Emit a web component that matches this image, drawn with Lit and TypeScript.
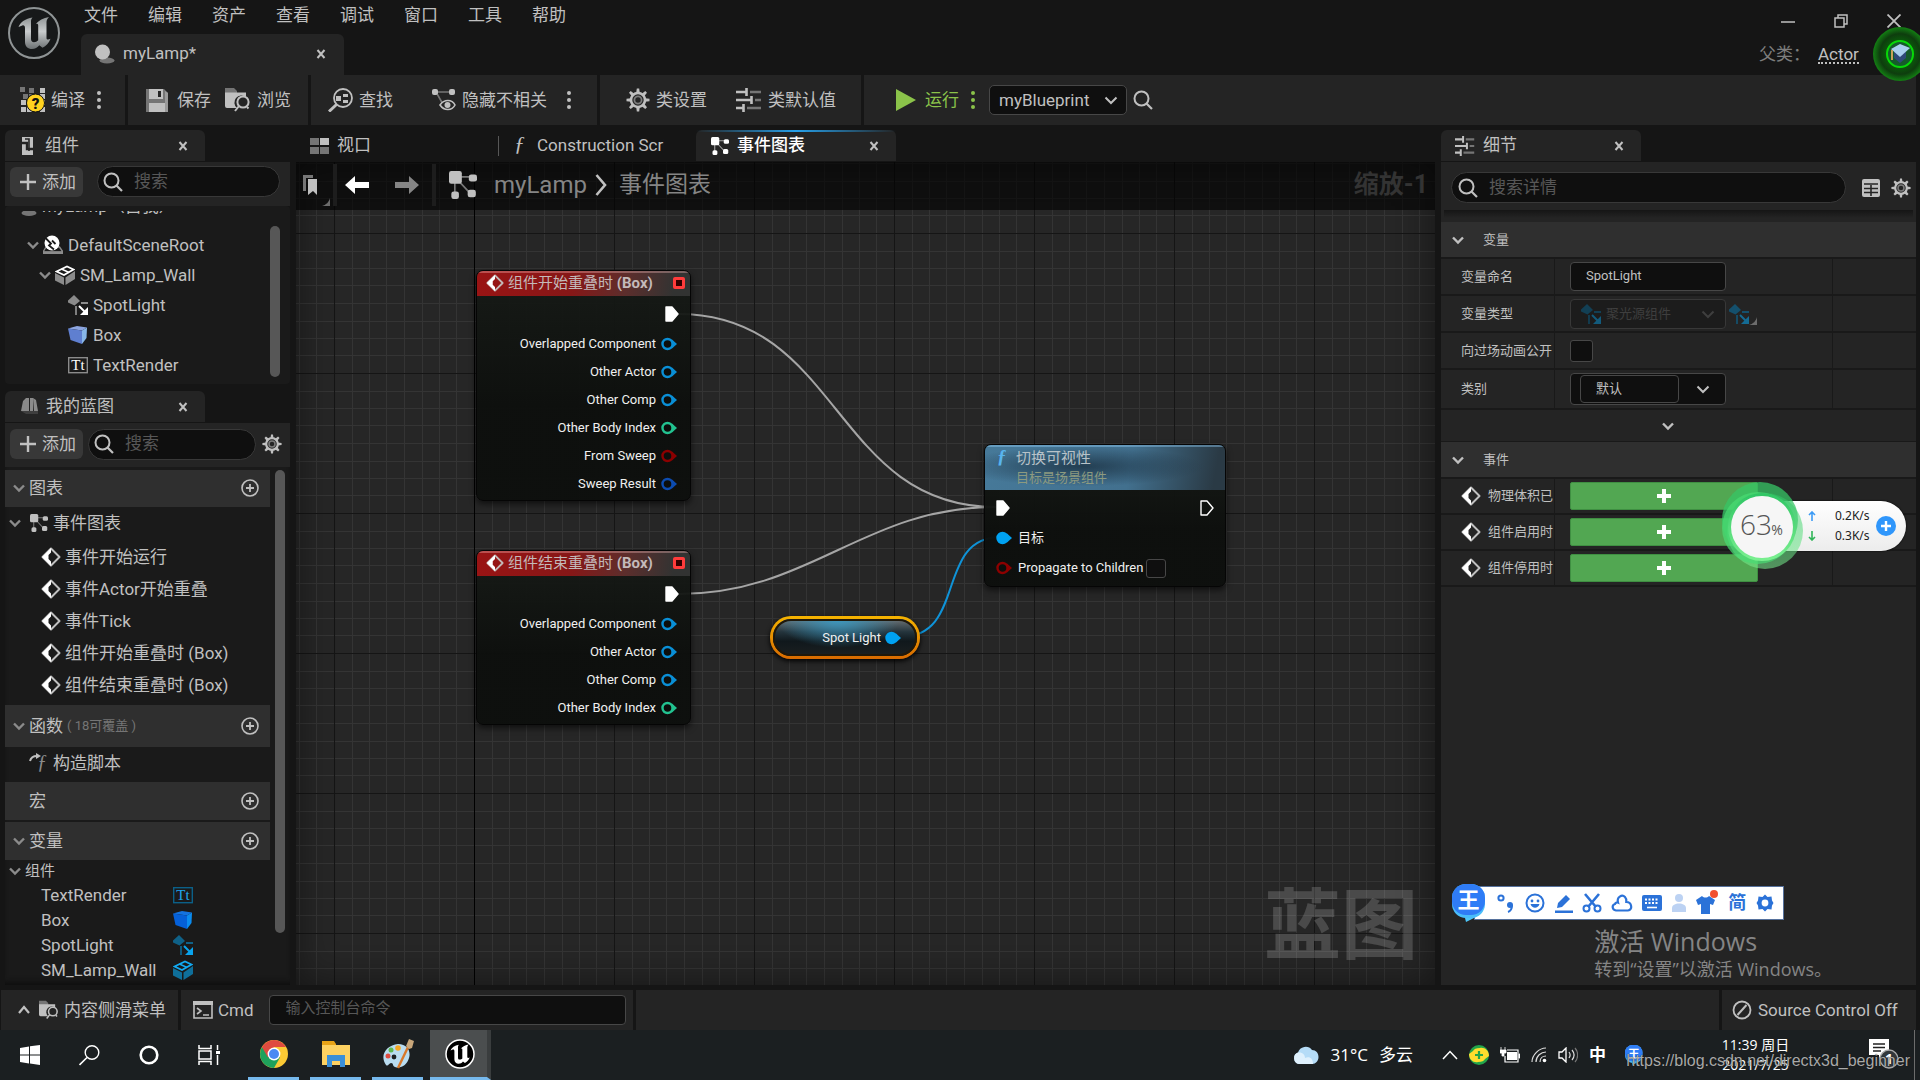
import { LitElement, html, svg, css, nothing } from "lit";
import { customElement } from "lit/decorators.js";

type Frag = unknown;

const ico = (w: number, h: number, body: Frag, cls = "") =>
  html`<svg class="ico ${cls}" width=${w} height=${h} viewBox="0 0 ${w} ${h}" aria-hidden="true">${body}</svg>`;

const chevron = (cls = "") =>
  ico(12, 12, svg`<path d="M1 3.500 6 8.500l5-5" fill="none" stroke="currentColor" stroke-width="2.400"/>`, cls);
const bigChevron = () =>
  ico(14, 12, svg`<path d="M1.500 3.500 7 9l5.500-5.500" fill="none" stroke="currentColor" stroke-width="2"/>`);
const cross = () =>
  ico(10, 10, svg`<path d="M1.500 1 8.500 9M8.500 1 1.500 9" stroke="currentColor" stroke-width="2" fill="none"/>`);
const magnifier = () =>
  ico(20, 20, svg`<circle cx="8.500" cy="8.500" r="7" fill="none" stroke="currentColor" stroke-width="2"/><path d="m13.500 13.500 5.500 5.500" stroke="currentColor" stroke-width="2.200"/>`);
const plusBig = () =>
  ico(18, 18, svg`<path d="M9 1v16M1 9h16" stroke="currentColor" stroke-width="2.400"/>`);
const plusCircle = () =>
  ico(18, 18, svg`<circle cx="9" cy="9" r="8" fill="none" stroke="currentColor" stroke-width="1.600"/><path d="M9 5v8M5 9h8" stroke="currentColor" stroke-width="1.800"/>`);
const dots = () =>
  ico(4, 20, svg`<circle cx="2" cy="3" r="2" fill="currentColor"/><circle cx="2" cy="10" r="2" fill="currentColor"/><circle cx="2" cy="17" r="2" fill="currentColor"/>`);

const gear = (s: number) => html`<svg class="ico" width=${s} height=${s} viewBox="0 0 24 24" aria-hidden="true">
  ${[0, 45, 90, 135, 180, 225, 270, 315].map(
    (a) => svg`<path d="M10.200 5 10.800.5h2.400L13.800 5z" fill="currentColor" transform="rotate(${a} 12 12)"/>`
  )}
  <circle cx="12" cy="12" r="7" fill="none" stroke="currentColor" stroke-width="2.600"/>
  <circle cx="12" cy="12" r="3.600" fill="none" stroke="#7c7c7c" stroke-width="1.800"/>
</svg>`;

const sliders = (w: number, h: number) =>
  html`<svg class="ico" width=${w} height=${h} viewBox="0 0 26 24" preserveAspectRatio="none" aria-hidden="true">
    <path d="M0 4h10M0 12h15M0 20h7" stroke="currentColor" stroke-width="2.600"/>
    <path d="M14 4h11M19 12h6M11 20h14" stroke="#757575" stroke-width="2.600"/>
    <path d="M10.500 0v8M15.500 8v8M7.500 16v8" stroke="currentColor" stroke-width="2.600"/>
  </svg>`;

const graphIcon = (s: number) => html`<svg class="ico" width=${s} height=${s} viewBox="0 0 24 24" aria-hidden="true">
  <path d="M5 5h16M5 5v16M5 5l14 15" stroke="currentColor" opacity=".6" stroke-width="1.400" fill="none"/>
  <rect x="0" y="0" width="11" height="11" rx="2" fill="currentColor"/>
  <rect x="17" y="3" width="7" height="6" rx="2" fill="currentColor"/>
  <rect x="2" y="17.500" width="6.500" height="6.500" rx="2" fill="currentColor"/>
  <rect x="16" y="16" width="7" height="6.500" rx="2" fill="currentColor"/>
</svg>`;

const eventIcon = (s = 20) => html`<svg class="ico" width=${s} height=${s} viewBox="0 0 20 20" aria-hidden="true">
  <path d="M10 1.500 18.500 10 10 18.500 1.500 10z" fill="none" stroke="currentColor" stroke-width="2" stroke-linejoin="round"/>
  <path d="M10 1 1 10l9 9v-4.500L7.500 12V8L10 5.500z" fill="#fff"/>
</svg>`;

const folderSearch = (s: number) => html`<svg class="ico" width=${s} height=${s} viewBox="0 0 26 26" aria-hidden="true">
  <path d="M0 1h9l3 3v3H0z" fill="#757575"/>
  <path d="M0 5.500h21V10a7 7 0 0 0-9 11H2a2 2 0 0 1-2-2z" fill="currentColor"/>
  <circle cx="18" cy="15" r="5.600" fill="#242424" stroke="currentColor" stroke-width="2"/>
  <path d="m14 19-4 5M22 20l1.500 1.500" stroke="currentColor" stroke-width="2"/>
</svg>`;

const spotIcon = (dim: string, lit: string) =>
  ico(20, 20, svg`
    <path d="M6 0 12 6 6.500 10.500 0 7.500V5.500z" fill=${dim}/>
    <path d="M13 8h7M8 11v9" stroke=${dim} stroke-width="1.800"/>
    <path d="m11 11 7 7" stroke=${lit} stroke-width="2"/>
    <path d="M20 12v8h-8z" fill=${lit}/>`);
const meshIcon = (dim: string, lit: string) =>
  ico(20, 20, svg`
    <path d="M0 8 9 12.500V20l-9-4.500zM20 6v8L10.500 20v-7.500z" fill=${dim}/>
    <path d="M1.500 6.500 12 1.500 18.500 4.500 9 10z" fill="none" stroke=${lit} stroke-width="1.800"/>
    <path d="M6.500 4 14 7.500" stroke=${lit} stroke-width="1.400"/>`);
const textIcon = (frame: string, lit: string) =>
  ico(20, 20, svg`
    <rect x=".7" y="2.700" width="18.600" height="15" fill="none" stroke=${frame} stroke-width="1.400"/>
    <text x="10" y="15" text-anchor="middle" font-family="Liberation Serif, serif" font-size="15" fill=${lit}>Tt</text>`);
const boxIcon = (a: string, b: string, c: string) =>
  ico(20, 20, svg`
    <path d="M0 3.500 9 1l10 1.500-5 3z" fill=${c}/>
    <path d="M0 3.500 14 5.500V19L2.500 15z" fill=${a}/>
    <path d="M14 5.500 19 2.500 18.500 13 14 19z" fill=${b}/>`);
const sceneIcon = () =>
  ico(20, 20, svg`
    <path d="M3 12 0 17h20l-3.500-5z" fill="none" stroke="#8b8b8b" stroke-width="1.400"/>
    <path d="M0 16.500h20V19H0z" fill="#8b8b8b"/>
    <circle cx="9" cy="8" r="7.500" fill="#fff"/>
    <path d="M2.500 3 8 8.500 6 10.500l5 4" fill="none" stroke="#1a1a1a" stroke-width="1.800"/>
    <path d="M9 5.500 12.500 9" stroke="#1a1a1a" stroke-width="1.800"/>`);
const selfIcon = () =>
  ico(18, 20, svg`<circle cx="7" cy="9" r="6.500" fill="currentColor"/><ellipse cx="10" cy="17" rx="7.500" ry="3" fill="#757575"/>`);
const sphereIcon = () =>
  ico(20, 20, svg`<ellipse cx="12" cy="16.500" rx="7.500" ry="3" fill="#757575"/><circle cx="7.500" cy="8" r="7.500" fill="currentColor"/>`);

const unrealMark = svg`
  <path d="M0 10C2 5 7 1.500 14 .5c-1.500 1.500-1.500 3-1.500 5V22c0 2 1 3.200 3 3.200 1.700 0 3-.8 4.200-2V8.500c0-1.700-1-2-2.700-1.300C20 3.500 25 1 30.500 0 28.500 2 28 3.500 28 5.500V21c0 1.800 1.800 2 4 .8-1.500 4.200-4.500 7.500-8 9l-3.200-2.600C19 30.500 16.500 32 13.500 32 9.500 32 6.500 29.500 6.500 25V11c0-2-1-3-2.700-2.500C2.500 8.800 1.300 9.500 0 10z"/>`;

const unrealLogo = () => html`<svg class="logo" width="52" height="64" viewBox="0 0 52 64" aria-label="Unreal">
  <defs><linearGradient id="steel" x1="0" y1="0" x2="0" y2="1"><stop offset="0" stop-color="#8f9495"/><stop offset=".45" stop-color="#c9cccd"/><stop offset="1" stop-color="#6c7173"/></linearGradient></defs>
  <circle cx="26" cy="33" r="25" fill="#17191a" stroke="#8f9495" stroke-width="2"/>
  <g transform="translate(10.500 17)" fill="url(#steel)">${unrealMark}</g>
</svg>`;

const pin = (color: string, filled = false) =>
  ico(16, 14, svg`
    <path d="M11 2.500 16 7l-5 4.500z" fill=${color}/>
    <circle cx="6.500" cy="7" r="5" fill=${filled ? color : "#0c0e0c"} stroke=${color} stroke-width="2.400"/>`);
const execPin = (filled: boolean) =>
  ico(14, 16, svg`<path d="M1 1h6l6 7-6 7H1z" fill=${filled ? "#fff" : "none"} stroke="#fff" stroke-width="1.400" stroke-linejoin="round"/>`);
const corner = () => ico(8, 8, svg`<path d="M8 0v8H0C4 7 7 4 8 0z" fill="#6c6c6c"/>`, "corner");

const BLUE = "#0a8fd6";
const CYAN = "#22c290";
const RED = "#8c0000";
const NAVY = "#0d4cb0";

interface GraphPin { label: string; color: string; }
interface TreeRow { level: number; label: string; icon: Frag; open?: boolean; }

@customElement("app-root")
export class AppRoot extends LitElement {
  static styles = css`
    :host {
      display: flex; flex-direction: column; position: relative; min-height: 100vh; overflow: hidden;
      background: #151515; color: #c0c0c0;
      font: 17px/20px Roboto, "Noto Sans CJK SC", sans-serif;
    }
    * { box-sizing: border-box; }
    button, input, select { font: inherit; color: inherit; background: none; border: 0; padding: 0; margin: 0; }
    input { min-width: 0; outline: 0; }
    input::placeholder { color: #575757; opacity: 1; }
    h2, h3, ul, p { margin: 0; padding: 0; font: inherit; list-style: none; }
    a { color: inherit; text-decoration: none; }
    .ico { flex: none; display: block; }
    button { display: flex; align-items: center; white-space: nowrap; }
    .grow { flex: 1; }

    .titlebar { display: flex; height: 75px; padding-left: 8px; }
    .logo { flex: none; }
    .titles { display: flex; flex-direction: column; justify-content: space-between; margin-left: 21px; }
    .menus { display: flex; gap: 30px; height: 30px; padding-left: 3px; }
    .tab { display: flex; align-items: center; width: 200px; height: 31px; padding: 0 17px 0 16px; border-radius: 6px 6px 0 0; background: #242424; }
    .tab .name { flex: 1; margin-left: 8px; padding-bottom: 2px; overflow: hidden; white-space: nowrap; text-align: left; }
    .file { width: 263px; height: 41px; padding: 0 18px 2px 14px; }
    .window { display: flex; flex-direction: column; margin-left: auto; padding: 14px 19px 0 0; }
    .winbtns { display: flex; gap: 39px; }
    .parent { display: flex; gap: 8px; margin: 16px 0 0 -22px; color: #7d7d7d; }
    .parent a { color: #c0c0c0; border-bottom: 2px dotted #c0c0c0; height: 20px; }

    .toolbar { display: flex; gap: 3px; height: 50px; margin-right: 4px; }
    .toolgroup { display: flex; align-items: center; background: #242424; }
    .toolgroup button { gap: 6px; }
    .g1 { width: 125px; padding-left: 20px; gap: 12px; }
    .g2 { width: 180px; padding-left: 18px; gap: 14px; }
    .g2 button { gap: 8px; }
    .g2 button + button { gap: 6px; }
    .g3 { width: 286px; padding-left: 17px; gap: 39px; }
    .g3 .pair { display: flex; gap: 20px; }
    .g4 { width: 261px; padding-left: 26px; gap: 29px; }
    .g5 { flex: 1; padding-left: 32px; }
    .run { color: #8bc34a; margin-right: 12px; }
    .g5 .run { gap: 9px; }
    .selectbox { position: relative; display: flex; align-items: center; margin: 0 6px 0 14px; color: #c0c0c0; }
    .selectbox select { appearance: none; width: 138px; height: 30px; padding-left: 9px; background: #0f0f0f; border: 1px solid #474747; border-radius: 5px; }
    .selectbox .ico { position: absolute; right: 9px; pointer-events: none; }
    .green { color: #8bc34a; }

    .main { display: flex; flex: 1; gap: 6px; padding: 5px 4px 0 5px; }
    .side { display: flex; flex-direction: column; flex: 0 0 285px; }
    .tools { display: flex; align-items: center; height: 44px; margin-top: 1px; padding: 0 8px 5px 5px; background: #242424; }
    .tools.low { padding-bottom: 2px; }
    .add { height: 30px; width: 73px; padding-left: 9px; gap: 5px; border-radius: 6px; background: #383838; }
    .search { display: flex; align-items: center; flex: 1; height: 31px; padding-left: 5px; gap: 11px; border: 1px solid #383838; border-radius: 16px; background: #0f0f0f; }
    .search input { flex: 1; padding-bottom: 2px; }
    .search-a { margin: 0 2px 0 14px; }
    .search-b { margin: 0 6px 0 5px; }
    .tree { display: flex; height: 178px; padding-top: 5px; background: #1a1a1a; border-radius: 4px; }
    .rows { flex: 1; overflow: hidden; }
    .treerow { display: flex; align-items: center; height: 30px; padding-left: 22px; }
    .treerow .ico + .ico { margin-left: 4px; }
    .treerow span { margin-left: 5px; }
    .treerow.l0 { height: 34px; margin-top: -15px; padding: 0 0 15px 14px; }
    .treerow.l2 { padding-left: 34px; }
    .treerow.l3 { padding-left: 63px; }
    .dim { color: #8b8b8b; }
    .thumb { flex: none; width: 10px; border-radius: 5px; background: #575757; }
    .tree .thumb { height: 151px; margin: 15px 10px 0 0; }
    .tab.second { margin-top: 7px; }
    .blueprint { display: flex; flex: 1; padding: 3px 5px 0 0; gap: 5px; background: #1a1a1a; box-shadow: inset 0 -6px 6px -4px #0c0c0c; }
    .sections { flex: 1; }
    .blueprint .thumb { height: 463px; }
    .section { display: flex; align-items: center; height: 38px; padding: 0 11px 0 8px; gap: 4px; background: #2f2f2f; }
    .section small { font-size: 13px; color: #757575; }
    .section.first { height: 37px; padding-bottom: 2px; }
    .section.tall { height: 42px; }
    .section.macro { margin-bottom: 2px; padding-left: 24px; }
    .leaf { display: flex; align-items: center; height: 32px; padding-left: 36px; gap: 4px; }
    .leaf.head { height: 34px; padding: 0 0 2px 4px; }
    .leaf.head .ico + .ico { margin-left: 5px; }
    .leaf.head span { margin-left: 1px; }
    .leaf.last { margin-bottom: 4px; }
    .leaf.script { height: 35px; padding: 0 0 3px 24px; }
    .leaf.group { height: 22px; padding-left: 4px; font-size: 15px; }
    .leaf.variable { height: 25px; }
    .leaf.variable span { width: 128px; }

    .center { display: flex; flex-direction: column; flex: 1; min-width: 0; }
    .tabs { display: flex; height: 31px; }
    .tabs .tab { background: none; padding-left: 14px; }
    .tabs .tab + .tab::before { content: ""; width: 1px; height: 20px; margin-right: 14px; background: #575757; }
    .tabs .tab.script { padding-left: 2px; padding-right: 32px; }
    .script .name { margin-left: 10px; }
    .tabs .tab.active { position: relative; padding-left: 15px; background: #242424; color: #fff; }
    .tabs .tab.active::before { position: absolute; left: 0; right: 0; top: 0; width: auto; height: 2px; margin: 0; background: linear-gradient(90deg, transparent, #26a0ea, transparent); }
    .active .name { font-weight: 500; }
    .active .x { color: #c0c0c0; }
    .graph { position: relative; flex: 1; margin-top: 1px; background: #262626; overflow: hidden; }
    .grid { position: absolute; inset: 0; width: 100%; height: 100%; }
    .shade { position: absolute; inset: 0; box-shadow: inset 0 0 36px rgba(0, 0, 0, 0.45); }
    .crumbs { position: relative; display: flex; align-items: center; height: 48px; padding: 0 7px 2px 7px; background: rgba(0, 0, 0, 0.6); font-size: 24px; line-height: 32px; color: #858585; }
    .crumbs .rule { width: 4px; height: 42px; background: #1d1d1d; }
    .mark { height: 42px; margin-right: 3px; gap: 3px; }
    .corner { align-self: flex-end; }
    .back { color: #fff; margin: 0 26px 0 8px; }
    .fwd { margin-right: 13px; }
    .crumbs .type { display: flex; color: #c0c0c0; margin: 0 17px 0 13px; }
    .crumbs .sep { margin: 0 12px 0 8px; color: #c0c0c0; }
    .crumbs .current { font-size: 23px; }
    .crumbs .zoom { margin-left: auto; color: #333; font-size: 25px; font-weight: 700; }
    .brand { position: absolute; right: 17px; bottom: 12px; font-size: 77px; line-height: 92px; font-weight: 700; color: rgba(255, 255, 255, 0.17); }

    .node { position: absolute; border: 1px solid #050505; border-radius: 7px; background: linear-gradient(rgba(22, 26, 22, 0.94), rgba(13, 15, 13, 0.97) 60%); box-shadow: 0 3px 6px rgba(0, 0, 0, 0.6); color: #f0f0f0; font-size: 13px; line-height: 18px; overflow: hidden; }
    .event { left: 180px; width: 215px; padding-bottom: 2px; }
    .n1 { top: 108px; }
    .n2 { top: 388px; }
    .n3 { left: 688px; top: 282px; width: 242px; padding-bottom: 3px; }
    .event h3 { display: flex; align-items: center; height: 25px; padding: 0 5px 3px 9px; gap: 4px; font-size: 15px; color: #c4b9b9; border-top: 2px solid rgba(255, 190, 190, 0.35); background: linear-gradient(100deg, #9a1414, #861717 45%, #5c2e2c 70%, #323332 92%); }
    .stop { width: 12px; height: 12px; margin-left: auto; border: 3px solid #ff3b3b; background: #300; border-radius: 2px; }
    .outexec { display: flex; justify-content: flex-end; align-items: center; height: 34px; padding: 1px 11px 0 0; }
    .pinrow { display: flex; justify-content: flex-end; align-items: center; height: 28px; gap: 5px; padding-right: 13px; }
    .fn { height: 45px; padding: 1px 0 0 31px; color: #b8c2c8; font-size: 15px; line-height: 20px; border-top: 2px solid rgba(140, 200, 240, 0.45); background: radial-gradient(ellipse at 40% 45%, rgba(24, 44, 60, 0.75), transparent 60%), linear-gradient(100deg, #467999, #42708e 60%, #2a3a45 95%); position: relative; }
    .fn p { font-size: 13px; line-height: 20px; color: #8c9a80; }
    .fn .ico { position: absolute; left: 11px; top: 2px; }
    .inrow { display: flex; align-items: center; height: 30px; padding: 0 12px 0 11px; gap: 6px; }
    .inrow.exec { justify-content: space-between; margin-top: 3px; padding-right: 11px; }
    .inrow label { display: flex; align-items: center; gap: 3px; }
    .check { appearance: none; width: 20px; height: 19px; border: 1px solid #474747; border-radius: 3px; background: #0f0f0f; }
    .getter { position: absolute; left: 474px; top: 454px; width: 150px; height: 43px; padding: 0 16px 0 0; display: flex; align-items: center; justify-content: flex-end; gap: 4px; border: 3px solid transparent; border-radius: 21px; color: #f0f0f0; font-size: 13px;
      background: radial-gradient(ellipse at 45% 0, #3b98c0, transparent 55%) padding-box, linear-gradient(#6d7376, #24343c 35%, #10181c 60%, #1b1f20) padding-box, linear-gradient(#f5b400, #d86a00) border-box; box-shadow: inset 0 0 0 2px #20180a, 0 2px 5px #000; }

    .details { display: flex; flex-direction: column; flex: 0 0 475px; font-size: 13px; line-height: 18px; }
    .details .tab { font-size: 17px; line-height: 20px; padding-left: 14px; }
    .pane { flex: 1; margin-top: 1px; background: #242424; }
    .filter { display: flex; align-items: center; padding: 10px 5px 0 10px; height: 41px; gap: 11px; font-size: 17px; }
    .filter .search { flex: 1; margin-right: 5px; padding-left: 6px; }
    .drop { height: 8px; margin: 7px 3px 4px; background: linear-gradient(#151515, transparent); }
    .cat { display: flex; align-items: center; height: 35px; padding-left: 11px; gap: 19px; background: #2f2f2f; }
    .prop { display: grid; grid-template-columns: 113px 278px 1fr; height: 37px; border-top: 2px solid #191919; }
    .prop.tall { height: 40px; }
    .prop.event-prop { height: 36px; }
    .prop > * { display: flex; align-items: center; padding-left: 15px; border-left: 1px solid #191919; overflow: hidden; white-space: nowrap; }
    .prop > :first-child { border: 0; padding-left: 20px; gap: 7px; }
    .prop input[type="text"] { width: 156px; height: 29px; padding: 0 0 3px 15px; border: 1px solid #474747; border-radius: 4px; background: #0f0f0f; }
    .prop .cb { width: 23px; height: 22px; }
    .typebtn { width: 156px; height: 30px; padding: 0 10px; gap: 5px; border: 1px solid #383838; border-radius: 4px; color: #3e3e3e; background: #1c1c1c; margin-right: 3px; }
    .typebtn .last { margin-left: auto; }
    .prop .corner { margin-bottom: 6px; }
    .combo { display: flex; align-items: center; width: 156px; height: 32px; padding-left: 9px; border: 1px solid #474747; border-radius: 4px; background: #0f0f0f; }
    .combo input[type="text"] { width: 99px; height: 28px; margin-right: 17px; }
    .more { display: flex; width: 100%; height: 34px; justify-content: center; border-top: 2px solid #191919; border-bottom: 1px solid #191919; padding-right: 21px; }
    .bind { justify-content: center; width: 188px; height: 28px; background: #52a752; border: 1px solid #3f8f42; border-radius: 2px; color: #fff; }
    .endline { height: 3px; border-top: 2px solid #191919; }

    .activate { position: absolute; right: 88px; top: 924px; color: #858585; font: 25px/34px "Open Sans", "Noto Sans CJK SC", sans-serif; }
    .activate p { font-size: 18px; line-height: 22px; }
    .ime { position: absolute; right: 136px; top: 886px; display: flex; align-items: center; justify-content: space-between; width: 310px; height: 34px; padding: 0 8px 0 21px; background: #fff; border: 1px solid #56719c; color: #2b72d8; }
    .ime .badge { position: absolute; left: -23px; top: -3px; }
    .ime b { font-size: 18px; line-height: 20px; }
    .meter { position: absolute; right: 14px; top: 480px; display: flex; align-items: center; height: 92px; color: #222; }
    .pill { display: flex; align-items: center; width: 166px; height: 50px; margin-left: -64px; padding: 0 10px 0 68px; border-radius: 0 25px 25px 0; background: linear-gradient(#fff, #ececec); font: 12px/20px "Noto Sans", sans-serif; box-shadow: 0 0 2px #000; }
    .pill .arrows { margin-right: 19px; }
    .pill .plus { margin-left: auto; }
    .orb { position: relative; z-index: 1; }
    .cap { position: absolute; right: -7px; top: 27px; }

    .status { display: flex; gap: 3px; height: 45px; padding: 5px 4px 0 1px; }
    .status > * { display: flex; align-items: center; height: 40px; background: #242424; }
    .drawer { width: 177px; padding-left: 17px; }
    .drawer .ico + .ico { margin: 0 5px 0 9px; }
    .cmd { width: 452px; padding: 0 7px 0 12px; gap: 5px; }
    .cmd input { flex: 1; height: 30px; margin-left: 10px; padding: 0 0 4px 16px; font-size: 15px; border: 1px solid #474747; border-radius: 4px; background: #0f0f0f; }
    .cmd label { display: flex; align-items: center; gap: 5px; }
    .source { width: 194px; padding-left: 10px; gap: 6px; }

    .taskbar { position: relative; display: flex; align-items: center; height: 50px; padding: 0 5px 0 20px; background: #1b1f21; color: #fff; }
    .sys { display: flex; align-items: center; gap: 39px; margin-right: 28px; }
    .app { display: flex; justify-content: center; width: 51px; height: 50px; margin-right: 11px; border-bottom: 3px solid #76b9ed; }
    .app.now { width: 61px; margin: 0 0 0 -4px; padding-left: 2px; background: #4b4e4f; border-right: 4px solid #3a3d3e; }
    .tray { display: flex; align-items: center; height: 50px; margin-left: auto; border-right: 1px solid #6c6c6c; font: 17px/20px "Open Sans", "Noto Sans CJK SC", sans-serif; }
    .weather { display: flex; align-items: center; gap: 12px; margin-right: 29px; }
    .weather .words { display: flex; gap: 11px; }
    .icons { display: flex; align-items: center; gap: 11px; margin-right: 76px; }
    .icons b { margin-right: 8px; }
    .clock { font-size: 14px; text-align: center; width: 73px; margin-right: 77px; white-space: nowrap; }
    .note { margin-right: 14px; }
    .credit { position: absolute; right: 10px; top: 21px; font: 16px/20px "Liberation Sans", sans-serif; color: rgba(225, 225, 225, 0.75); text-shadow: 0 0 1px #000; }
  `;

  private menus = ["文件", "编辑", "资产", "查看", "调试", "窗口", "工具", "帮助"];

  private tree: TreeRow[] = [
    { level: 1, label: "DefaultSceneRoot", icon: sceneIcon(), open: true },
    { level: 2, label: "SM_Lamp_Wall", icon: meshIcon("#8b8b8b", "#fff"), open: true },
    { level: 3, label: "SpotLight", icon: spotIcon("#8b8b8b", "#fff") },
    { level: 3, label: "Box", icon: boxIcon("#5f7fd0", "#88b7e8", "#8da5e0") },
    { level: 3, label: "TextRender", icon: textIcon("#8b8b8b", "#fff") },
  ];

  private events = ["事件开始运行", "事件Actor开始重叠", "事件Tick", "组件开始重叠时 (Box)", "组件结束重叠时 (Box)"];

  private variables: [string, Frag][] = [
    ["TextRender", textIcon("#0b6088", "#1fa5ef")],
    ["Box", boxIcon("#0560d8", "#0a8cf0", "#1473e0")],
    ["SpotLight", spotIcon("#0f6187", "#09a4ee")],
    ["SM_Lamp_Wall", meshIcon("#0f6f9a", "#12aaf2")],
  ];

  private basePins: GraphPin[] = [
    { label: "Overlapped Component", color: BLUE },
    { label: "Other Actor", color: BLUE },
    { label: "Other Comp", color: BLUE },
    { label: "Other Body Index", color: CYAN },
  ];

  private tabHead(icon: Frag, name: string, cls = "") {
    return html`<div class="tab ${cls}">${icon}<span class="name">${name}</span><button class="x" aria-label="关闭">${cross()}</button></div>`;
  }

  private search(id: string, hint: string, cls = "") {
    return html`<label class="search ${cls}" for=${id}>${magnifier()}<input id=${id} type="text" placeholder=${hint} size="4" /></label>`;
  }

  private section(name: string, cls: string, open: boolean, extra: Frag = nothing) {
    return html`<h3 class="section ${cls}">${open ? chevron("dim") : nothing}<span>${name}</span>${extra}<i class="grow"></i><button aria-label="添加">${plusCircle()}</button></h3>`;
  }

  private eventNode(title: string, pins: GraphPin[], cls: string) {
    return html`<article class="node event ${cls}">
      <h3>${eventIcon(18)}<span>${title} <b>(Box)</b></span><i class="stop"></i></h3>
      <div class="outexec">${execPin(true)}</div>
      ${pins.map((p) => html`<div class="pinrow"><span>${p.label}</span>${pin(p.color)}</div>`)}
    </article>`;
  }

  private renderTitle() {
    return html`<header class="titlebar">
      ${unrealLogo()}
      <div class="titles">
        <nav class="menus">${this.menus.map((m) => html`<button>${m}</button>`)}</nav>
        ${this.tabHead(sphereIcon(), "myLamp*", "file")}
      </div>
      <div class="window">
        <div class="winbtns">
          <button aria-label="最小化">${ico(14, 14, svg`<path d="M0 8h14" stroke="currentColor" stroke-width="1.500"/>`)}</button>
          <button aria-label="还原">${ico(14, 14, svg`<path d="M1 4h9v9H1zM4 4V1h9v9h-3" fill="none" stroke="currentColor" stroke-width="1.500"/>`)}</button>
          <button aria-label="关闭">${ico(14, 14, svg`<path d="m.5.5 13 13M13.500.5l-13 13" stroke="currentColor" stroke-width="1.800"/>`)}</button>
        </div>
        <div class="parent"><span>父类：</span><a href="#actor">Actor</a></div>
      </div>
      <div class="cap">${ico(54, 54, svg`
        <defs><radialGradient id="halo"><stop offset=".48" stop-color="#0a5a0a"/><stop offset=".75" stop-color="#0e3d0e"/><stop offset="1" stop-color="#138013"/></radialGradient></defs>
        <circle cx="27" cy="27" r="27" fill="url(#halo)"/><circle cx="27" cy="27" r="13" fill="#155b2a" stroke="#08d808" stroke-width="2"/>
        <path d="M21 25v6l6 5 6-5v-6z" fill="#2f4a78"/><path d="m18 22 9-5 10 4-10 9z" fill="#a9d0ee"/><path d="M19 23v10" stroke="#caa05a" stroke-width="2"/>`)}</div>
    </header>`;
  }

  private renderToolbar() {
    return html`<div class="toolbar">
      <div class="toolgroup g1">
        <button>${ico(25, 26, svg`
          ${[[0, 0], [9, 1], [20, 1], [3, 7], [9, 7], [1, 13], [1, 20], [7, 20], [20, 20], [20, 7], [20, 13]].map(
            ([x, y], i) => svg`<rect x=${x} y=${y} width="5" height="5" fill=${i < 2 || i === 3 || i === 4 ? "#757575" : "#c0c0c0"}/>`
          )}
          <circle cx="15.500" cy="16" r="9" fill="#ffd21f" stroke="#111" stroke-width="1"/>
          <text x="15.500" y="21.500" text-anchor="middle" font-size="15" font-weight="900" fill="#111" font-family="Roboto">?</text>`)}<span>编译</span></button>
        <button aria-label="编译选项">${dots()}</button>
      </div>
      <div class="toolgroup g2">
        <button>${ico(23, 23, svg`<path d="M0 0h18l4 4v19H0z" fill="#757575"/><path d="M3 0h14v10H3zM3 14h16v9H3z" fill="currentColor"/><path d="M12 2h3v6h-3z" fill="#242424"/><path d="M19 2l3 2v19h-3z" fill="#9a9a9a"/>`)}<span>保存</span></button>
        <button>${folderSearch(26)}<span>浏览</span></button>
      </div>
      <div class="toolgroup g3">
        <button>${ico(25, 24, svg`<circle cx="15" cy="10" r="9" fill="none" stroke="currentColor" stroke-width="1.800"/><path d="M8.500 16.500 1 23.500" stroke="currentColor" stroke-width="3"/><path d="M8 8h5v5H8zM15 6h5v3h-5zM15 12h5v3h-5zM14 8v5" fill="currentColor"/>`)}<span>查找</span></button>
        <div class="pair">
          <button>${ico(24, 24, svg`<path d="M3 4h18M4 4l8 14" stroke="#757575" stroke-width="1.600"/><rect x="0" y="1" width="6" height="6" rx="2" fill="currentColor"/><rect x="17" y="1" width="6" height="6" rx="2" fill="currentColor"/><path d="M8 17c4-6 12-6 15 0-3 6-11 6-15 0z" fill="#242424" stroke="currentColor" stroke-width="1.600"/><circle cx="15.500" cy="17" r="3" fill="currentColor"/>`)}<span>隐藏不相关</span></button>
          <button aria-label="隐藏选项">${dots()}</button>
        </div>
      </div>
      <div class="toolgroup g4">
        <button>${gear(24)}<span>类设置</span></button>
        <button>${sliders(26, 24)}<span>类默认值</span></button>
      </div>
      <div class="toolgroup g5">
        <button class="run">${ico(20, 22, svg`<path d="M0 0 20 11 0 22z" fill="currentColor"/>`)}<span>运行</span></button>
        <button class="green" aria-label="运行选项">${dots()}</button>
        <label class="selectbox"><select aria-label="调试对象"><option>myBlueprint</option></select>${bigChevron()}</label>
        <button aria-label="定位">${magnifier()}</button>
      </div>
    </div>`;
  }

  private renderLeft() {
    return html`<aside class="side">
      ${this.tabHead(ico(16, 20, svg`<path d="M1 1h11v18H1z" fill="currentColor"/><path d="M0 7h6v6h7" fill="none" stroke="#242424" stroke-width="2.400"/><path d="M4 3h4v12" fill="none" stroke="#242424" stroke-width="1.600"/>`), "组件")}
      <div class="tools"><button class="add">${plusBig()}<span>添加</span></button>${this.search("find-component", "搜索", "search-a")}</div>
      <div class="tree">
        <ul class="rows">
          <li class="treerow l0">${selfIcon()}<span>myLamp（自我）</span></li>
          ${this.tree.map((r) => html`<li class="treerow l${r.level}">${r.open ? chevron("dim") : nothing}${r.icon}<span>${r.label}</span></li>`)}
        </ul>
        <div class="thumb"></div>
      </div>
      ${this.tabHead(ico(17, 20, svg`<path d="M2 4 5 1h3v13H0zM9 1h3v13H9zM12 1l3 2 2 11h-4z" fill="#8b8b8b"/><path d="M0 14h17v3H5z" fill="#3e3e3e"/>`), "我的蓝图", "second")}
      <div class="tools low"><button class="add">${plusBig()}<span>添加</span></button>${this.search("find-member", "搜索", "search-b")}<button aria-label="设置">${gear(20)}</button></div>
      <div class="blueprint">
        <div class="sections">
          ${this.section("图表", "first", true)}
          <ul>
            <li class="leaf head">${chevron("dim")}${graphIcon(18)}<span>事件图表</span></li>
            ${this.events.map((e, i) => html`<li class="leaf ${i === 4 ? "last" : ""}">${eventIcon()}<span>${e}</span></li>`)}
          </ul>
          ${this.section("函数", "tall", true, html`<small>( 18可覆盖 )</small>`)}
          <ul><li class="leaf script">${ico(20, 20, svg`<path d="M1 8c1-4 4-5 7-5" fill="none" stroke="currentColor" stroke-width="2"/><path d="m7 0 5 3-5 3z" fill="currentColor"/><text x="8" y="16" font-family="Liberation Serif, serif" font-style="italic" font-size="20" fill="#8b8b8b">ƒ</text>`)}<span>构造脚本</span></li></ul>
          ${this.section("宏", "macro", false)}
          ${this.section("变量", "", true)}
          <ul>
            <li class="leaf group">${chevron("dim")}<span>组件</span></li>
            ${this.variables.map(([n, i]) => html`<li class="leaf variable"><span>${n}</span>${i}</li>`)}
          </ul>
        </div>
        <div class="thumb"></div>
      </div>
    </aside>`;
  }

  private renderGraph() {
    const minor = [18, 35, 52, 70, 88, 105, 122];
    return html`<section class="center">
      <div class="tabs">
        <button class="tab">${ico(19, 18, svg`<path d="M0 1h9v7H0z" fill="#757575"/><path d="M10 1h9v7h-9z" fill="currentColor"/><path d="M0 10h9v7H0zM10 10h9v7h-9z" fill="#757575"/>`)}<span class="name">视口</span></button>
        <button class="tab script">${ico(14, 20, svg`<text x="1" y="15" font-family="Liberation Serif, serif" font-style="italic" font-size="22" fill="currentColor">ƒ</text>`)}<span class="name">Construction Script</span></button>
        ${this.tabHead(graphIcon(18), "事件图表", "active")}
      </div>
      <div class="graph">
        <svg class="grid" aria-hidden="true">
          <defs><pattern id="cells" x="38" y="71" width="140" height="140" patternUnits="userSpaceOnUse">
            ${minor.map((m) => svg`<path d="M${m} 0h1v140h-1zM0 ${m}h140v1H0z" fill="#343434"/>`)}
            <path d="M0 0h1v140H0zM0 0h140v1H0z" fill="#151515"/>
          </pattern></defs>
          <rect width="100%" height="100%" fill="url(#cells)"/>
          <rect x="178" width="1" height="100%" fill="#000"/>
          <g fill="none" stroke-width="2">
            <path d="M382 152C545 152 537 345 700 345" stroke="#a5a5a5"/>
            <path d="M382 432C515 432 567 345 700 345" stroke="#a5a5a5"/>
            <path d="M604 475C672 475 638 375 705 375" stroke="#0f93d8"/>
          </g>
        </svg>
        <div class="shade"></div>
        <div class="crumbs">
          <button class="mark" aria-label="书签">${ico(16, 20, svg`<path d="M0 0h10v3H3v13H0z" fill="#757575"/><path d="M5 4h9v16l-4-4-5 4z" fill="#c0c0c0"/>`)}${corner()}</button>
          <i class="rule"></i>
          <button class="back" aria-label="后退">${ico(24, 18, svg`<path d="M0 9 10 0v6h14v6H10v6z" fill="currentColor"/>`)}</button>
          <button class="fwd" aria-label="前进">${ico(24, 18, svg`<path d="M24 9 14 0v6H0v6h14v6z" fill="currentColor"/>`)}</button>
          <i class="rule"></i>
          <span class="type">${graphIcon(28)}</span>
          <span>myLamp</span>
          <span class="sep">${ico(12, 22, svg`<path d="m1.500 1 8.500 10-8.500 10" fill="none" stroke="currentColor" stroke-width="2.600"/>`)}</span>
          <span class="current">事件图表</span>
          <span class="zoom">缩放-1</span>
        </div>
        ${this.eventNode("组件开始重叠时", [...this.basePins, { label: "From Sweep", color: RED }, { label: "Sweep Result", color: NAVY }], "n1")}
        ${this.eventNode("组件结束重叠时", this.basePins, "n2")}
        <article class="node n3">
          <div class="fn">${ico(14, 18, svg`<text x="1" y="14" font-family="Liberation Serif, serif" font-style="italic" font-weight="700" font-size="19" fill="#58b4ee">ƒ</text>`)}切换可视性<p>目标是场景组件</p></div>
          <div class="inrow exec">${execPin(true)}${execPin(false)}</div>
          <div class="inrow">${pin("#00a2f2", true)}<span>目标</span></div>
          <div class="inrow">${pin(RED)}<label>Propagate to Children<input class="check" type="checkbox" /></label></div>
        </article>
        <article class="getter"><span>Spot Light</span>${pin("#00a2f2", true)}</article>
        <div class="brand">蓝图</div>
      </div>
    </section>`;
  }

  private renderDetails() {
    const binds = ["物理体积已", "组件启用时", "组件停用时"];
    return html`<aside class="details">
      ${this.tabHead(sliders(20, 20), "细节")}
      <div class="pane">
        <div class="filter">${this.search("find-detail", "搜索详情")}
          <button aria-label="表格">${ico(18, 18, svg`<rect width="18" height="18" rx="2" fill="currentColor"/><path d="M2 5h14M2 9.500h14M2 13.500h14M9 6v11" stroke="#242424" stroke-width="1.600"/>`)}</button>
          <button aria-label="设置">${gear(20)}</button></div>
        <div class="drop"></div>
        <h3 class="cat">${chevron()}<span>变量</span></h3>
        <div class="prop"><label for="var-name">变量命名</label><div><input id="var-name" type="text" .value=${"SpotLight"} /></div><div></div></div>
        <div class="prop"><span>变量类型</span><div><button class="typebtn" disabled>${spotIcon("#123f54", "#125a7c")}<span>聚光源组件</span><span class="last">${bigChevron()}</span></button>${spotIcon("#14506d", "#146b94")}${corner()}</div><div></div></div>
        <div class="prop"><label for="expose">向过场动画公开</label><div><input id="expose" class="check cb" type="checkbox" /></div><div></div></div>
        <div class="prop tall"><label for="category">类别</label><div><div class="combo"><input id="category" type="text" .value=${"默认"} /><button aria-label="展开">${bigChevron()}</button></div></div><div></div></div>
        <button class="more" aria-label="更多">${chevron()}</button>
        <h3 class="cat">${chevron()}<span>事件</span></h3>
        ${binds.map((b) => html`<div class="prop event-prop"><span>${eventIcon()}${b}</span><div><button class="bind" aria-label=${b}>${ico(14, 14, svg`<path d="M7 0v14M0 7h14" stroke="currentColor" stroke-width="4"/>`)}</button></div><div></div></div>`)}
        <div class="endline"></div>
      </div>
    </aside>`;
  }

  private renderFloating() {
    return html`
      <div class="meter">
        <div class="orb">${ico(84, 92, svg`
          <defs><linearGradient id="ring" x1="0" y1="0" x2="0" y2="1"><stop offset="0" stop-color="#2fc564"/><stop offset="1" stop-color="#7bf090"/></linearGradient></defs>
          <circle cx="40" cy="40" r="38" fill="#37c566" opacity=".75"/>
          <circle cx="45" cy="51" r="38" fill="url(#ring)" opacity=".55"/>
          <circle cx="38" cy="48" r="36" fill="#49dc74" opacity=".7"/>
          <circle cx="42" cy="47" r="34" fill="url(#ring)"/>
          <circle cx="42" cy="47" r="31" fill="#f6f6f6"/>
          <text x="36" y="55" text-anchor="middle" font-family="Open Sans, sans-serif" font-weight="300" font-size="28" fill="#555">63</text>
          <text x="57" y="55" text-anchor="middle" font-family="Open Sans, sans-serif" font-size="14" fill="#555">%</text>`)}</div>
        <div class="pill">
          <div class="arrows">${ico(8, 30, svg`<path d="M4 10V1M1 4l3-3 3 3" fill="none" stroke="#3d9bf5" stroke-width="1.600"/><path d="M4 20v9M1 26l3 3 3-3" fill="none" stroke="#2fb457" stroke-width="1.600"/>`)}</div>
          <div>0.2K/s<br />0.3K/s</div>
          <button class="plus" aria-label="加速">${ico(20, 20, svg`<circle cx="10" cy="10" r="10" fill="#2f96fb"/><path d="M10 5v10M5 10h10" stroke="#fff" stroke-width="2.400"/>`)}</button>
        </div>
      </div>
      <div class="ime">
        <span class="badge">${this.imeBadge(34, 38)}</span>
        ${ico(20, 20, svg`<circle cx="5" cy="5" r="2.600" fill="none" stroke="currentColor" stroke-width="2"/><circle cx="14" cy="12" r="3" fill="currentColor"/><path d="M16 12c0 4-1 6-4 7" stroke="currentColor" stroke-width="2" fill="none"/>`)}
        ${ico(20, 20, svg`<circle cx="10" cy="10" r="8.500" fill="none" stroke="currentColor" stroke-width="2"/><circle cx="7" cy="8" r="1.400" fill="currentColor"/><circle cx="13" cy="8" r="1.400" fill="currentColor"/><path d="M5.500 11c1.500 5 7.500 5 9 0z" fill="currentColor"/>`)}
        ${ico(20, 20, svg`<path d="m3 15 1-5 8-8 4 4-8 8zM1 17.500h18V20H1z" fill="currentColor"/>`)}
        ${ico(20, 20, svg`<path d="m3 1 11 13M17 1 6 14" stroke="currentColor" stroke-width="2.600"/><circle cx="4.500" cy="15.500" r="3" fill="none" stroke="currentColor" stroke-width="2"/><circle cx="15.500" cy="15.500" r="3" fill="none" stroke="currentColor" stroke-width="2"/>`)}
        ${ico(22, 20, svg`<path d="M5 17.500C1 17 .5 12 4 11c0-1 2-2 3-1.500C5.500 4 11 1 14 4c1.500 1.500 1.500 3 1.300 5C21 9 22 17 17 17.500z" fill="none" stroke="currentColor" stroke-width="2.200"/>`)}
        ${ico(20, 20, svg`<rect y="2" width="20" height="16" rx="2" fill="currentColor"/><path d="M3 6.500h14M3 10h14" stroke="#fff" stroke-width="2" stroke-dasharray="2 1.500"/><path d="M5 14.500h10" stroke="#fff" stroke-width="1.600"/>`)}
        ${ico(16, 20, svg`<circle cx="8" cy="5" r="4" fill="#bcd2f3"/><path d="M1 19v-4c0-6 14-6 14 0v4z" fill="#bcd2f3"/>`)}
        ${ico(24, 26, svg`<path d="M1 10 7 6c2 2 5 2 7 0l6 4-2 5-3-1v10H6V14l-3 1z" fill="currentColor"/><circle cx="19" cy="4" r="4" fill="#f2502f"/>`)}
        <b>简</b>
        ${ico(20, 20, svg`<path d="M10 1.500 12.500 4l4-.5.5 4L18.500 10 17 12.500l-.5 4-4-.5L10 18.500 7.500 16l-4 .5-.5-4L1.500 10 3 7.500l.5-4 4 .5z" fill="currentColor"/><circle cx="10" cy="10" r="3.400" fill="#fff"/>`)}
      </div>
      <div class="activate">激活 Windows<p>转到“设置”以激活 Windows。</p></div>`;
  }

  private imeBadge(w: number, h: number) {
    return html`<svg class="ico" width=${w} height=${h} viewBox="0 0 34 38" aria-hidden="true">
      <path d="M12 30 14 38l10-5z" fill="#4cc6fa"/><rect width="33" height="34" rx="14" fill="#49bdfa"/><rect width="33" height="31" rx="14" fill="#2f7cf6"/>
      <text x="16.500" y="24" text-anchor="middle" font-family="Noto Sans CJK SC, sans-serif" font-weight="700" font-size="22" fill="#fff">王</text></svg>`;
  }

  private renderStatus() {
    return html`<footer class="status">
      <button class="drawer">${ico(12, 12, svg`<path d="M1 9l5-6 5 6" fill="none" stroke="currentColor" stroke-width="2.200"/>`)}${folderSearch(20)}<span>内容侧滑菜单</span></button>
      <div class="cmd"><label for="console">${ico(20, 20, svg`<path d="M0 1h20v4H0z" fill="currentColor"/><path d="M1 2h18v16H1z" fill="none" stroke="currentColor" stroke-width="1.600"/><path d="m4 8 4 3-4 3M10 15h6" fill="none" stroke="currentColor" stroke-width="1.600"/>`)}<span>Cmd</span></label><input id="console" type="text" placeholder="输入控制台命令" /></div>
      <div class="grow"></div>
      <button class="source">${ico(20, 20, svg`<circle cx="10" cy="10" r="8.500" fill="none" stroke="currentColor" stroke-width="1.800"/><path d="M14.500 5 5.500 15" stroke="currentColor" stroke-width="2"/>`)}<span>Source Control Off</span></button>
    </footer>`;
  }

  private renderTaskbar() {
    return html`<footer class="taskbar">
      <div class="sys">
        <button aria-label="开始">${ico(20, 20, svg`<path d="M0 3 9 1.500V9.500H0zM10 1.300 20 0v9.500H10zM0 10.500h9v8L0 17zM10 10.500h10V20l-10-1.500z" fill="#fff"/>`)}</button>
        <button aria-label="搜索">${ico(21, 21, svg`<circle cx="13" cy="7.500" r="6.800" fill="none" stroke="#fff" stroke-width="1.400"/><path d="M8 12.500.5 20" stroke="#fff" stroke-width="1.600"/>`)}</button>
        <button aria-label="Cortana">${ico(20, 20, svg`<circle cx="10" cy="10" r="8.300" fill="none" stroke="#fff" stroke-width="2.600"/>`)}</button>
        <button aria-label="任务视图">${ico(22, 20, svg`<path d="M1 0v3.500h12V0M1 20v-3.500h12V20M1 6h12v8H1zM19.500 0v5M19.500 10v10" fill="none" stroke="#fff" stroke-width="1.500"/><path d="M18 6h4v3h-4z" fill="#fff"/>`)}</button>
      </div>
      <button class="app" aria-label="Chrome">${ico(28, 28, svg`<circle cx="14" cy="14" r="14" fill="#fbc934"/><path d="M14 14 1.900 7A14 14 0 0 0 14 28l6-10.500z" fill="#1fa15b"/><path d="M1.900 7A14 14 0 0 1 26.100 7H14l-6 10.500z" fill="#df4b3f"/><circle cx="14" cy="14" r="6.400" fill="#fff"/><circle cx="14" cy="14" r="5" fill="#4a89f3"/>`)}</button>
      <button class="app" aria-label="资源管理器">${ico(28, 26, svg`<path d="M0 0h12l2 3v4H0z" fill="#e8a317"/><path d="M0 4h28v20H0z" fill="#fdd161"/><path d="M5 26V14h18v12h-5v-6h-8v6z" fill="#3b8fd8"/>`)}</button>
      <button class="app" aria-label="画图">${ico(32, 30, svg`<path d="M4 26C-3 16 5 6 16 5c10 0 13 8 11 14-2 7-8 11-14 9-3-1-1-4-4-4-2 0-3 4-5 2z" fill="#b9dcf0"/><circle cx="6" cy="17" r="2.500" fill="#df4b3f"/><circle cx="9" cy="11" r="2.500" fill="#5fb84f"/><circle cx="16" cy="9" r="2.800" fill="#f5a623"/><circle cx="12" cy="18" r="2.400" fill="#1b1f21"/><path d="M16 29 27 6" stroke="#d8782a" stroke-width="2.400"/><path d="m24 7 3-7 5 2-2 7-3 1z" fill="#c9a77a"/>`)}</button>
      <button class="app now" aria-label="Unreal">${ico(30, 30, svg`<circle cx="15" cy="15" r="14" fill="#000" stroke="#fff" stroke-width="1.500"/><g transform="translate(5.500 5.500) scale(.6)" fill="#fff">${unrealMark}</g>`)}</button>
      <div class="tray">
        <div class="weather">${ico(27, 20, svg`<path d="M7 19a6 6 0 0 1-1-11.500 8 8 0 0 1 14-2.500c4 0 6.500 3 6.500 7s-3 7-6 7z" fill="#b5dcf7"/><path d="M7 19a6 6 0 0 1-1-11.500C11 7 13 10 13 13c5-2 8 1 8 6z" fill="#dff1fd"/>`)}<div class="words"><span>31°C</span><span>多云</span></div></div>
        <div class="icons">
          ${ico(16, 10, svg`<path d="m1 9 7-7.500L15 9" fill="none" stroke="#fff" stroke-width="1.500"/>`)}
          ${ico(20, 20, svg`<circle cx="10" cy="10" r="10" fill="#23a54a"/><path d="M0 9c0 6 5 9 9 8 4 0 6-1 7-3l4-3C20 5 15 2 11 3 7 3 5 4 4 6z" fill="#fddc2e"/><path d="M10 6v8M6 10h8" stroke="#23a54a" stroke-width="2.200"/>`)}
          ${ico(20, 16, svg`<path d="M7 5h10v8H7z" fill="#fff"/><path d="M7 3h11v12H5V9" fill="none" stroke="#fff" stroke-width="1.200"/><path d="M19 7h1v4h-1zM0 3h6v3H4v3H2V6H0zM1 0v3M5 0v3" fill="#fff" stroke="#fff" stroke-width=".8"/>`)}
          ${ico(16, 16, svg`<path d="M1 15C1 8 8 1 15 1M5 15c0-6 5-10 10-10M9 15c0-4 3-6 6-6" fill="none" stroke="#ddd" stroke-width="1.200"/><circle cx="13.500" cy="13.500" r="1.800" fill="#fff"/>`)}
          ${ico(20, 16, svg`<path d="M1 5h3l4-4v14l-4-4H1z" fill="none" stroke="#fff" stroke-width="1.300"/><path d="M11 5c1.500 2 1.500 4 0 6M14 3c2.500 3 2.500 7 0 10" fill="none" stroke="#ddd" stroke-width="1.200"/><path d="M17 1c3.500 4 3.500 10 0 14" fill="none" stroke="#777" stroke-width="1.200"/>`)}
          <b>中</b>
          ${this.imeBadge(18, 20)}
        </div>
        <div class="clock">11:39 周日<br />2021/7/25</div>
        <button class="note" aria-label="通知">${ico(31, 32, svg`<path d="M0 0h20v16h-6l-4 4v-4H0z" fill="#fff"/><path d="M4 5h12M4 8.500h12M4 12h8" stroke="#222" stroke-width="1.400"/><circle cx="20" cy="20" r="9" fill="#33373a" stroke="#aaa" stroke-width="1.400"/><text x="20" y="25" text-anchor="middle" font-size="14" font-weight="700" font-family="Open Sans, sans-serif" fill="#fff">1</text>`)}</button>
      </div>
      <div class="credit">https://blog.csdn.net/directx3d_beginner</div>
    </footer>`;
  }

  render() {
    return html`${this.renderTitle()}${this.renderToolbar()}
      <main class="main">${this.renderLeft()}${this.renderGraph()}${this.renderDetails()}</main>
      ${this.renderStatus()}${this.renderTaskbar()}${this.renderFloating()}`;
  }
}
